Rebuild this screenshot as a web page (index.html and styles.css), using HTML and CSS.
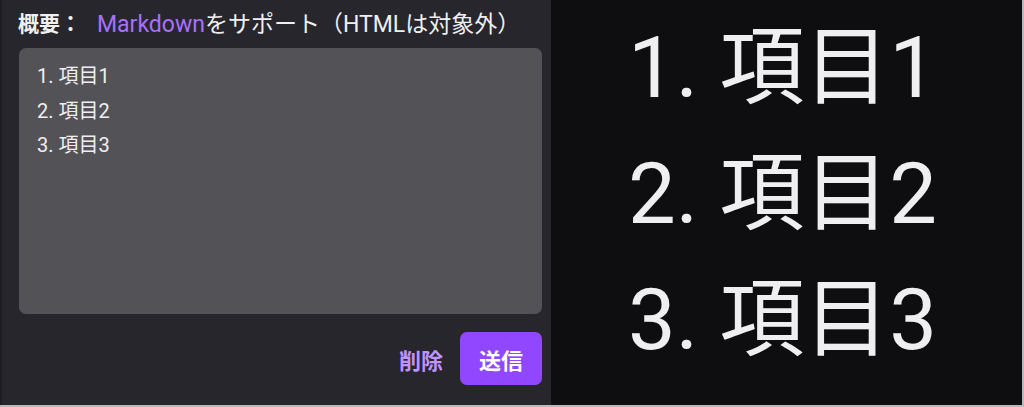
FILE: index.html
```html
<!DOCTYPE html>
<html lang="ja">
<head>
<meta charset="utf-8">
<link rel="stylesheet" href="styles.css">
</head>
<body>
<div class="page">
  <section class="editor">
    <div class="label-row">
      <span class="label">概要：</span>
      <span class="hint"><span class="md">Markdown</span>をサポート（HTMLは対象外）</span>
    </div>
    <div class="textarea">
      <div class="line">1. 項目1</div>
      <div class="line">2. 項目2</div>
      <div class="line">3. 項目3</div>
    </div>
    <div class="actions">
      <button class="btn-text">削除</button>
      <button class="btn-primary">送信</button>
    </div>
  </section>
  <section class="preview">
    <div class="big-line">1. 項目1</div>
    <div class="big-line">2. 項目2</div>
    <div class="big-line">3. 項目3</div>
  </section>
</div>
</body>
</html>
```

FILE: styles.css
```css
* { box-sizing: border-box; }
html, body { margin: 0; padding: 0; }
body {
  background: #b9b9bc;
  font-family: "Roboto", "Noto Sans CJK JP", sans-serif;
  color: #efeff1;
  width: 1024px;
  height: 407px;
  overflow: hidden;
}
.page {
  display: flex;
  height: 405px;
}
.editor {
  width: 551px;
  background: #27262c;
  border-left: 2px solid #1e1d22;
  padding: 8px 9px 0 16px;
  display: flex;
  flex-direction: column;
}
.label-row {
  display: flex;
  align-items: center;
  height: 28px;
  white-space: nowrap;
}
.label {
  font-weight: 700;
  font-size: 21px;
  margin-right: 16px;
}
.hint {
  font-weight: 400;
  font-size: 23px;
}
.md { color: #a970ff; }
.textarea {
  margin-top: 12px;
  height: 266px;
  margin-left: 1px;
  background: #535257;
  border-radius: 7px;
  padding: 11px 18px;
  font-size: 20px;
  line-height: 34.5px;
}
.actions {
  display: flex;
  justify-content: flex-end;
  align-items: center;
  gap: 17px;
  margin-top: 18px;
}
.btn-text {
  background: none;
  border: none;
  color: #bf94ff;
  font-family: inherit;
  font-weight: 700;
  font-size: 22px;
  padding: 0;
}
.btn-primary {
  background: #9147ff;
  border: none;
  border-radius: 7px;
  color: #ffffff;
  font-family: inherit;
  font-weight: 700;
  font-size: 22px;
  width: 82px;
  height: 53px;
  padding: 0;
}
.preview {
  flex: 1;
  background: #0e0e10;
  margin-right: 2px;
  padding: 5px 0 0 77px;
  font-size: 85px;
  line-height: 126px;
  white-space: nowrap;
}
```
